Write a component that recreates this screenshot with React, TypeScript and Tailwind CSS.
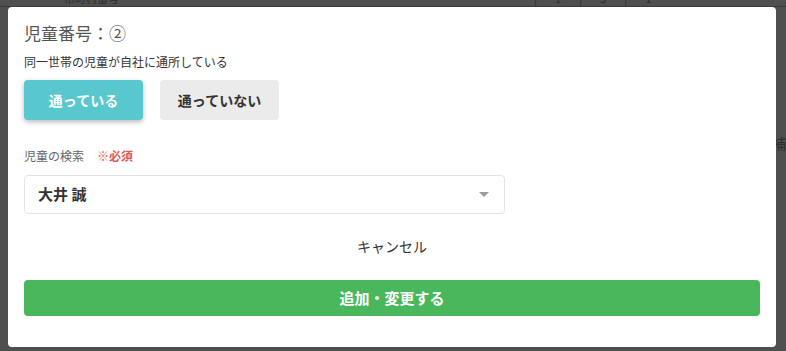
const FONT = "font-['Noto_Sans_CJK_JP','Noto_Sans',sans-serif]";

export default function App() {
  return (
    <div className={`relative h-[351px] w-[786px] overflow-hidden bg-[#4f4f4f] ${FONT}`}>
      {/* dimmed page behind the overlay */}
      <div className="absolute left-0 top-[-9px] flex h-[16px] w-full items-center border-b border-[#3a3a3a] text-[11px] text-[#2c2c2c]">
        <span className="ml-[64px] w-[470px]">市町村番号</span>
        <span className="flex gap-[18px]">
          <span>|</span><span>1</span><span>|</span><span>3</span><span>|</span><span>1</span>
        </span>
      </div>
      <div className="absolute right-0 top-[133px] text-[14px] text-[#2c2c2c]">補</div>

      <div className="pl-[8px] pt-[7px]">
        <div className="relative flex h-[340px] w-[768px] flex-col rounded-[4px] bg-white px-4 pt-[14px]">
          <h2 className="text-[17px] leading-[24px] text-[#555]">児童番号：②</h2>
          <p className="mt-[9px] text-[12px] leading-[16px] text-[#333]">同一世帯の児童が自社に通所している</p>

          <div className="mt-[10px] flex gap-[17px]">
            <button className="h-[40px] w-[119px] rounded-[4px] bg-[#58c8ce] text-[14px] font-bold text-white shadow-[0_2px_5px_rgba(0,0,0,.28)]">
              通っている
            </button>
            <button className="h-[40px] w-[119px] rounded-[4px] bg-[#ebebeb] text-[14px] font-bold text-[#333]">
              通っていない
            </button>
          </div>

          <div className="mt-[28px] flex items-center gap-[13px] text-[12px] leading-[16px]">
            <span className="text-[#666]">児童の検索</span>
            <span className="font-bold text-[#dc5a55]">※必須</span>
          </div>

          <div className="mt-[11px] flex h-[39px] w-[481px] items-center justify-between rounded-[4px] border border-[#e3e3e3] pl-[13px] pr-[15px]">
            <span className="text-[15px] font-bold text-[#333]">大井 誠</span>
            <svg width="10" height="5" viewBox="0 0 10 5">
              <path d="M0 0h10L5 5z" fill="#999" />
            </svg>
          </div>

          <div className="mt-[22px] text-center text-[14px] leading-[20px] text-[#333]">キャンセル</div>

          <button className="mt-[24px] h-[36px] w-full rounded-[4px] bg-[#49b85c] text-[15px] font-bold text-white">
            追加・変更する
          </button>
        </div>
      </div>
    </div>
  );
}
